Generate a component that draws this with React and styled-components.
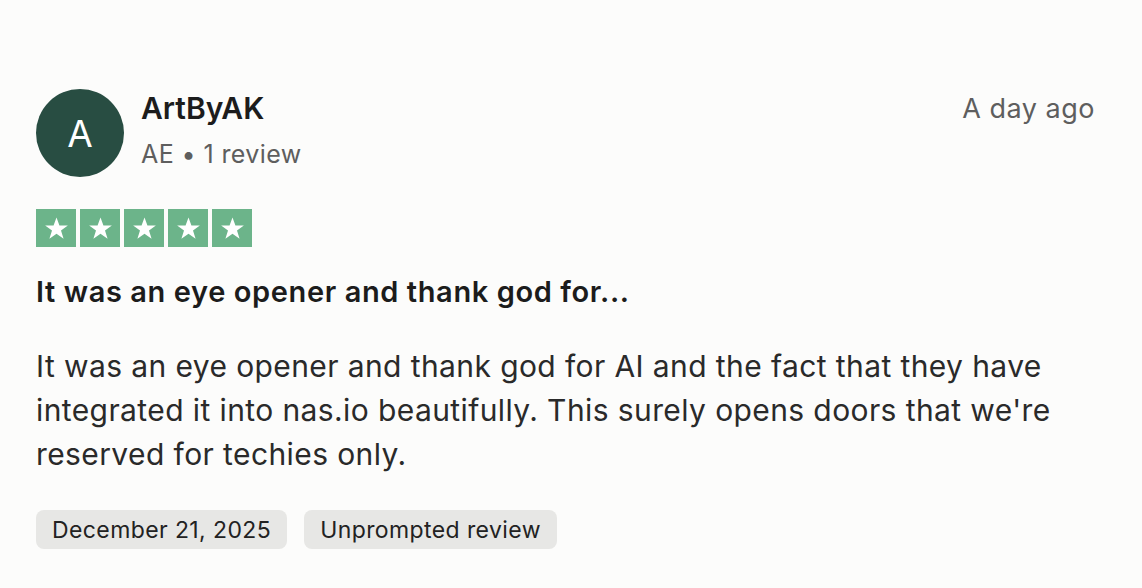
import React from 'react';
import styled, { createGlobalStyle } from 'styled-components';

const GlobalStyle = createGlobalStyle`
  body {
    margin: 0;
    background: #fcfcfb;
    font-family: Inter, "Liberation Sans", sans-serif;
  }
`;

const Card = styled.article`
  width: 1142px;
  height: 588px;
  box-sizing: border-box;
  padding: 89px 47px 0 36px;
  display: flex;
  flex-direction: column;
`;

const Header = styled.header`
  display: flex;
  align-items: flex-start;
`;

const Avatar = styled.div`
  width: 88px;
  height: 88px;
  border-radius: 50%;
  background: #284d42;
  color: #ffffff;
  display: flex;
  align-items: center;
  justify-content: center;
  font-size: 37px;
  font-weight: 400;
  flex-shrink: 0;
`;

const Who = styled.div`
  display: flex;
  flex-direction: column;
  margin-left: 17px;
  padding-top: 1px;
  flex: 1;
`;

const Name = styled.div`
  font-size: 30px;
  font-weight: 600;
  color: #1c1c1c;
  line-height: 36px;
`;

const Meta = styled.div`
  font-size: 25px;
  color: #5e5e5e;
  line-height: 32px;
  margin-top: 12px;
  letter-spacing: 0.4px;
`;

const When = styled.time`
  font-size: 27px;
  color: #5e5e5e;
  line-height: 36px;
  padding-top: 2px;
  letter-spacing: 0.5px;
`;

const Stars = styled.div`
  display: flex;
  gap: 4px;
  margin-top: 32px;
`;

const StarBox = styled.div`
  width: 40px;
  height: 38px;
  background: #6cb48a;
  display: flex;
  align-items: center;
  justify-content: center;
`;

const Title = styled.h3`
  margin: 27px 0 0;
  font-size: 29px;
  font-weight: 600;
  color: #1c1c1c;
  line-height: 36px;
  letter-spacing: 0.6px;
`;

const Body = styled.p`
  margin: 34px 0 0;
  font-size: 30px;
  line-height: 44px;
  color: #2a2a2a;
  letter-spacing: 0.4px;
`;

const Tags = styled.div`
  display: flex;
  gap: 17px;
  margin-top: 34px;
`;

const Tag = styled.span`
  background: #e7e7e5;
  border-radius: 8px;
  height: 39px;
  padding: 0 16px;
  display: flex;
  align-items: center;
  font-size: 23px;
  color: #222;
  letter-spacing: 0.4px;
`;

const Star = () => (
  <svg width="27" height="27" viewBox="0 0 24 24">
    <path
      d="M12 2.2l2.6 7.1h7.5l-6.1 4.5 2.3 7.3L12 16.6l-6.3 4.5 2.3-7.3-6.1-4.5h7.5z"
      fill="#ffffff"
    />
  </svg>
);

export default function App() {
  return (
    <>
      <GlobalStyle />
      <Card>
        <Header>
          <Avatar>A</Avatar>
          <Who>
            <Name>ArtByAK</Name>
            <Meta>AE • 1 review</Meta>
          </Who>
          <When>A day ago</When>
        </Header>
        <Stars>
          {[0, 1, 2, 3, 4].map((i) => (
            <StarBox key={i}>
              <Star />
            </StarBox>
          ))}
        </Stars>
        <Title>It was an eye opener and thank god for...</Title>
        <Body>
          It was an eye opener and thank god for AI and the fact that they have
          integrated it into nas.io beautifully. This surely opens doors that
          we're reserved for techies only.
        </Body>
        <Tags>
          <Tag>December 21, 2025</Tag>
          <Tag>Unprompted review</Tag>
        </Tags>
      </Card>
    </>
  );
}
